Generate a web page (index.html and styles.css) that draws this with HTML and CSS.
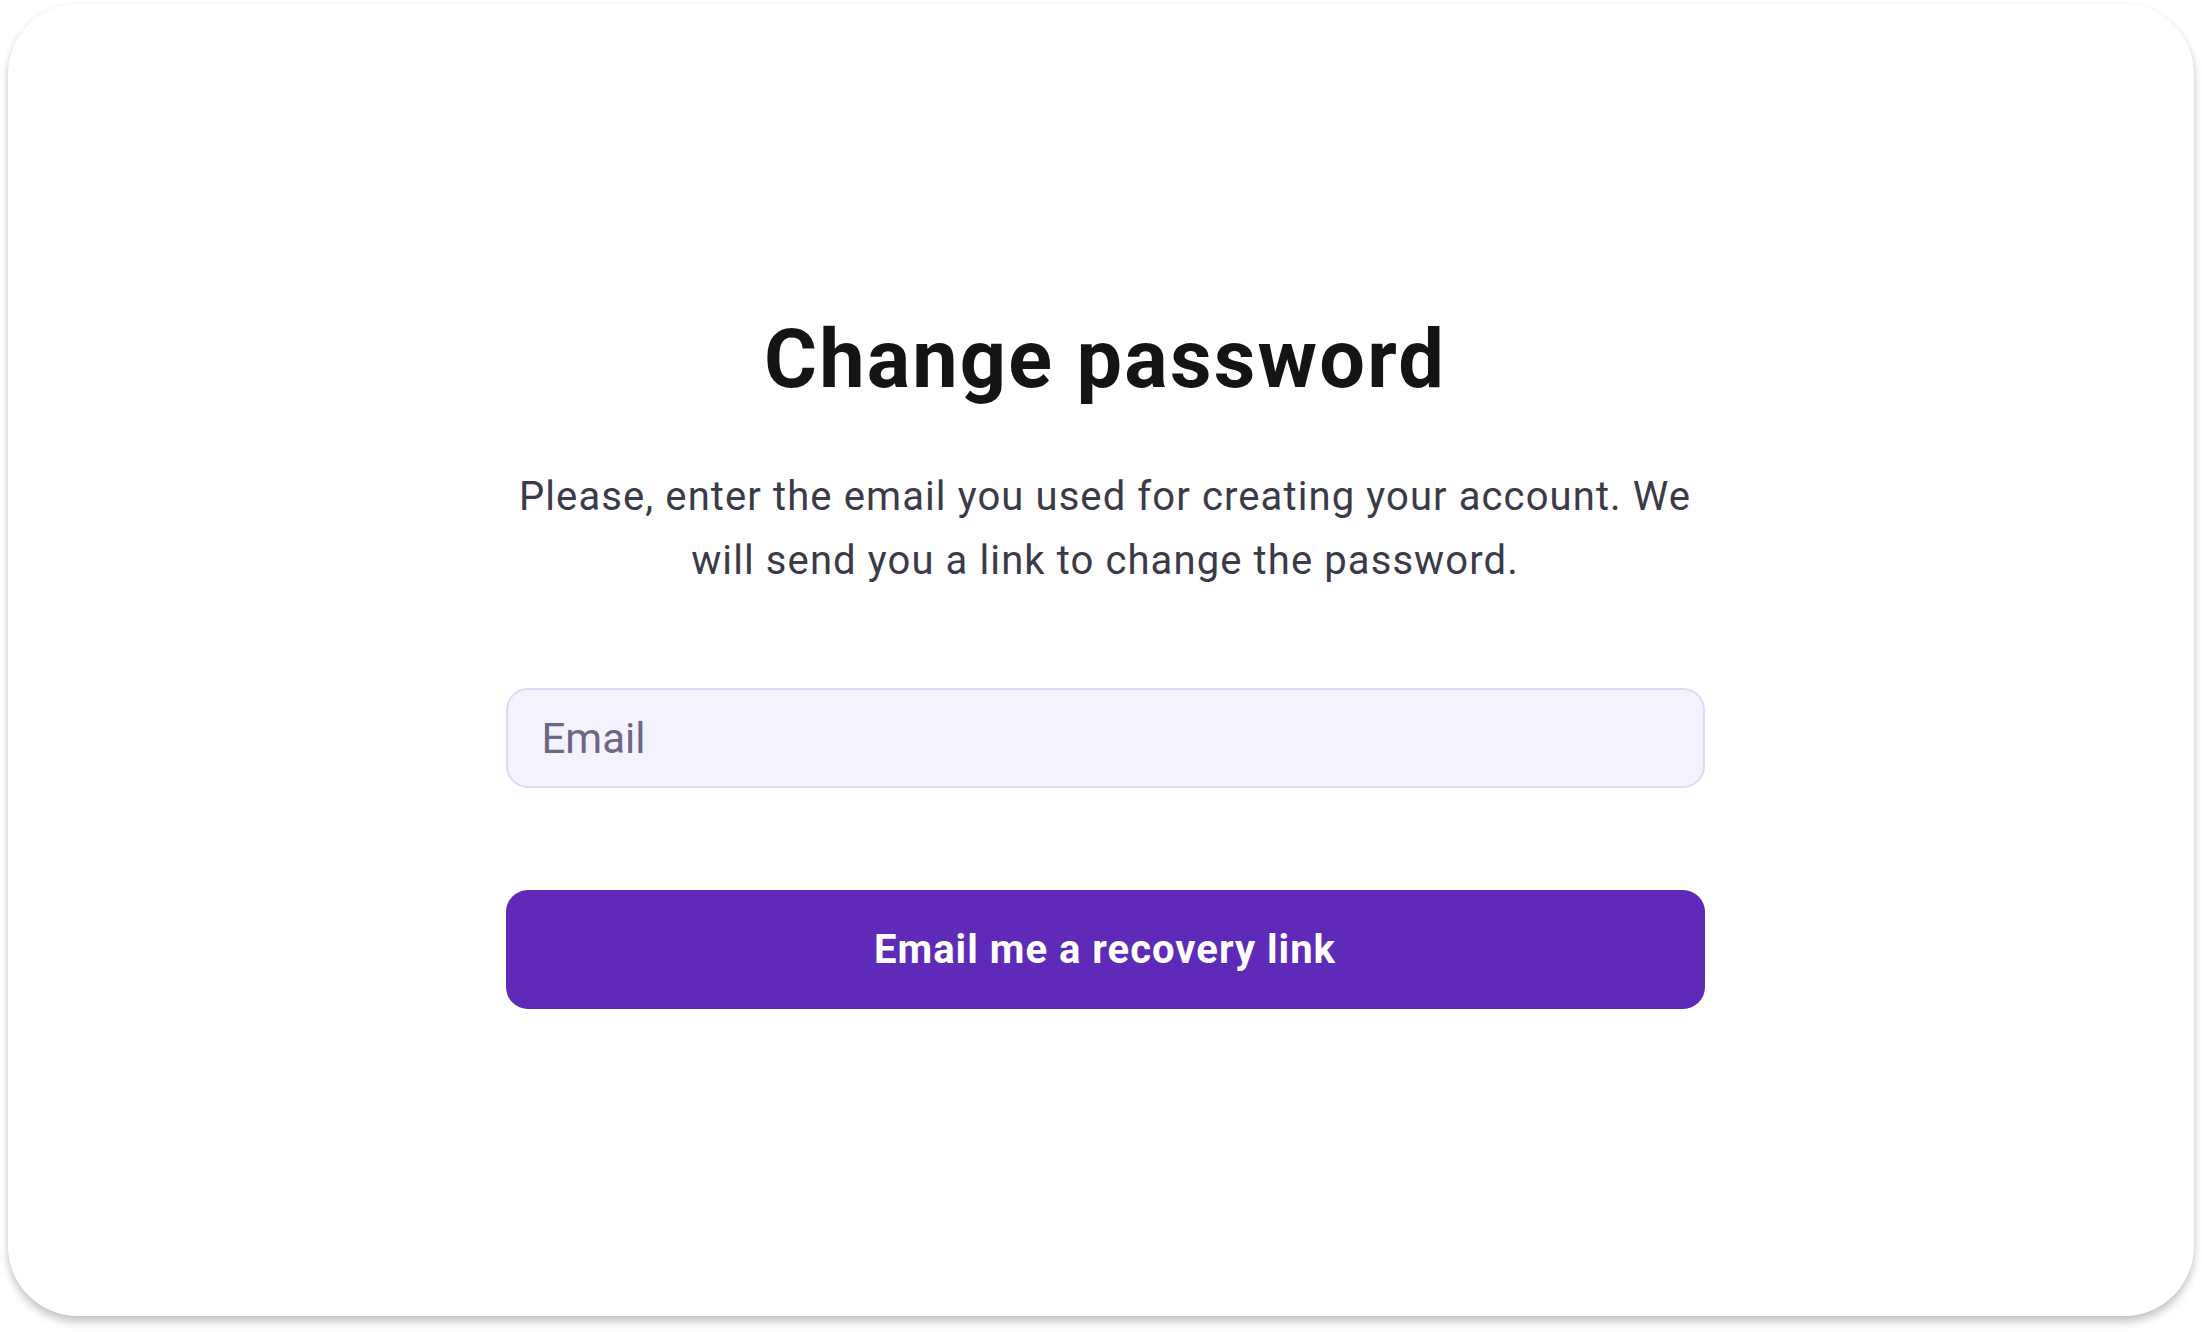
FILE: index.html
```html
<!DOCTYPE html>
<html lang="en">

<head>
    <meta charset="UTF-8">
    <meta name="viewport" content="width=device-width, initial-scale=1.0">
    <title>Change password</title>
    <link rel="stylesheet" href="styles.css">
</head>

<body>
    <div class="card">
        <form class="recover" onsubmit="return false">
            <h1>Change password</h1>
            <p class="hint">Please, enter the email you used for creating your account. We will send you a link to change the password.</p>
            <input class="email" type="email" placeholder="Email">
            <button class="send" type="submit">Email me a recovery link</button>
        </form>
    </div>
</body>

</html>
```

FILE: styles.css
```css
html,
body {
    margin: 0;
    height: 100%;
    background: #ffffff;
}

body {
    overflow: hidden;
    font-family: Roboto, "Liberation Sans", sans-serif;
    padding: 4px 8px 16px 8px;
    box-sizing: border-box;
}

.card {
    height: 100%;
    background: #fff;
    border-radius: 70px;
    box-shadow: 0 6px 8px rgba(0, 0, 0, 0.22), 0 0 6px rgba(0, 0, 0, 0.04);
    display: flex;
    justify-content: center;
}

.recover {
    width: 1199px;
    margin-left: 8px;
    padding-top: 308px;
    display: flex;
    flex-direction: column;
    align-items: stretch;
}

h1 {
    margin: 0;
    font-size: 81px;
    line-height: 96px;
    font-weight: 700;
    letter-spacing: 2.2px;
    color: #141414;
    text-align: center;
}

.hint {
    margin: 57px 0 0 0;
    font-size: 40px;
    line-height: 64px;
    letter-spacing: 1.1px;
    color: #3a3a48;
    text-align: center;
}

.email {
    margin-top: 95px;
    height: 100px;
    box-sizing: border-box;
    border: 2px solid #dfd9f6;
    border-radius: 22px;
    background: #f4f2fe;
    padding: 0 34px;
    font-family: inherit;
    font-size: 42px;
    color: #333;
    outline: none;
}

.email::placeholder {
    color: #6c6784;
}

.send {
    margin-top: 102px;
    height: 119px;
    border: none;
    border-radius: 22px;
    background: #5e2ab7;
    color: #fff;
    font-family: inherit;
    font-size: 40px;
    font-weight: 700;
    letter-spacing: 1px;
    cursor: pointer;
}
```
